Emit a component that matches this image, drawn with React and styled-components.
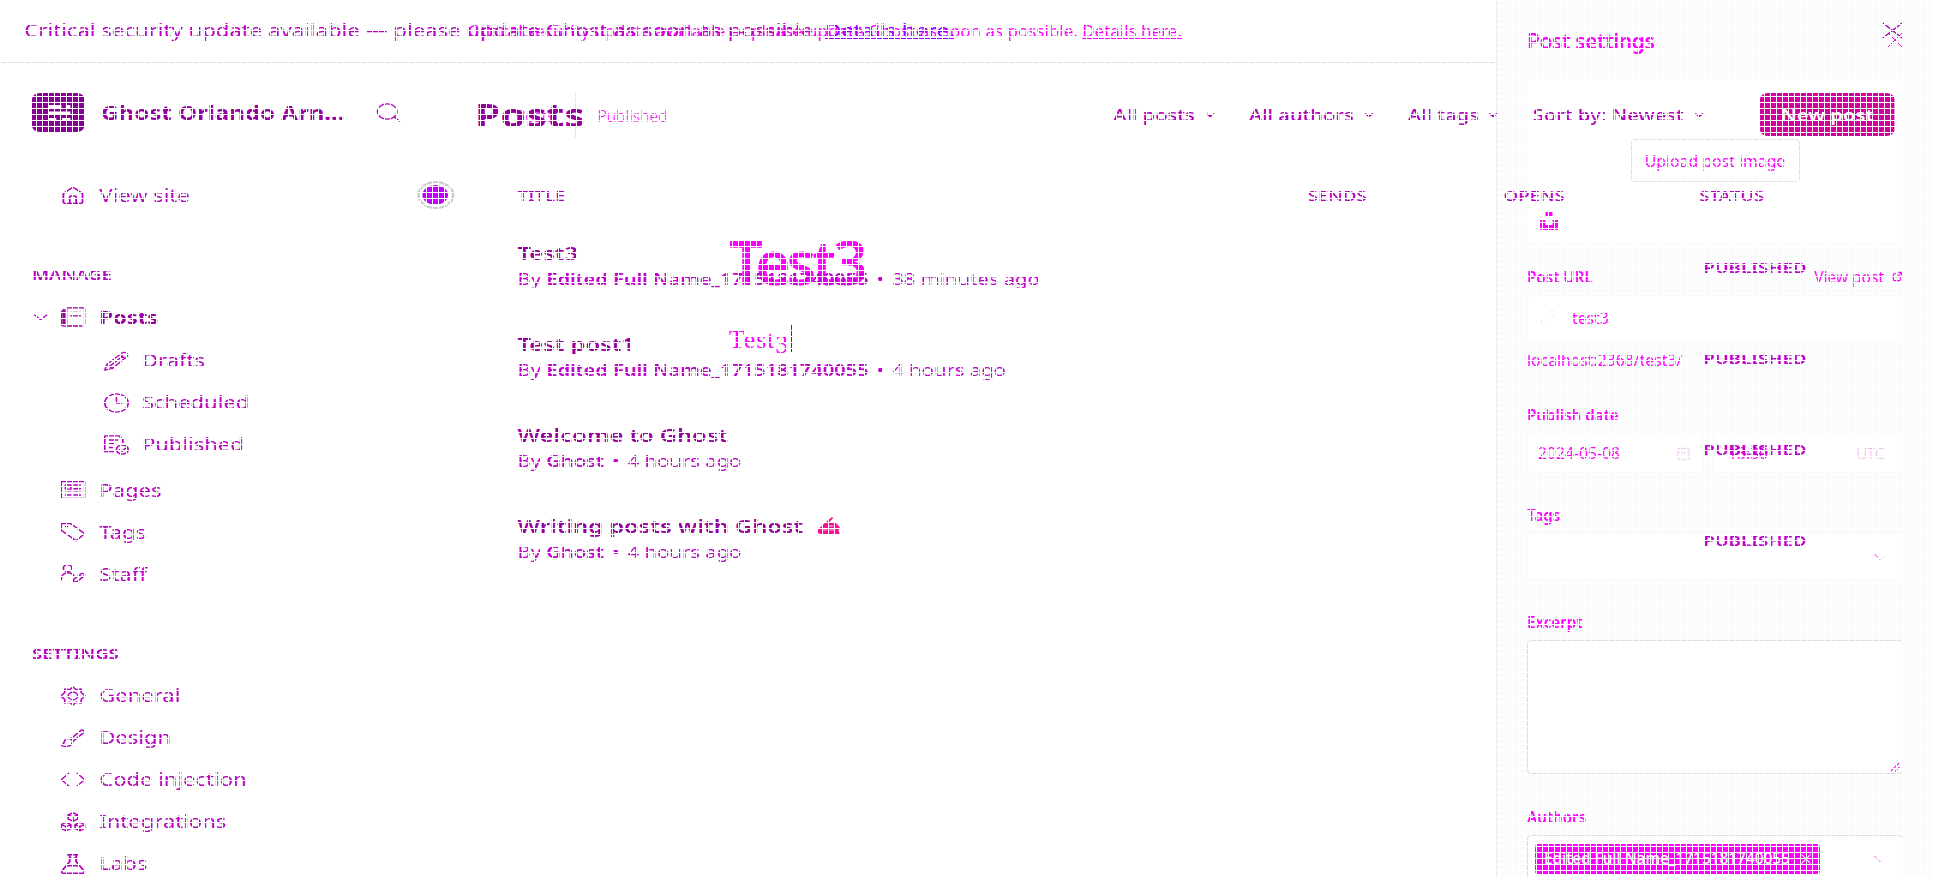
import React from 'react';
import styled, { createGlobalStyle, css } from 'styled-components';
import { Home, Search, ExternalLink, CalendarDays } from 'lucide-react';

const GlobalStyle = createGlobalStyle`
  * { box-sizing: border-box; }
  body { margin: 0; background: #fff; font-family: "Noto Sans", sans-serif; overflow: hidden; }
`;

const STRETCH = 1.28;
const ink = { dark: '#98009e', mid: '#b800c2', soft: '#c000ce', hot: '#ff00ff' };

const Stage = styled.div`
  position: relative;
  display: grid;
  width: 1933px;
  height: 878px;
  overflow: hidden;
  background: #fff;
  &::after {
    content: '';
    position: absolute;
    inset: 0;
    pointer-events: none;
    background-image: linear-gradient(to right, #fff 1px, transparent 1px),
      linear-gradient(to bottom, #fff 1px, transparent 1px);
    background-size: 6px 6px;
  }
`;
const layer = css`
  grid-area: 1 / 1;
  height: 878px;
  overflow: hidden;
`;

/* ---------- admin layer ---------- */
const Admin = styled.div`
  ${layer}
  display: grid;
  grid-template: 63px 1fr / 342px 1fr;
  width: 1510px;
  transform: scaleX(${STRETCH});
  transform-origin: 0 0;
`;
const AdminBanner = styled.header`
  grid-column: 1 / -1;
  display: flex;
  align-items: center;
  justify-content: space-between;
  padding: 0 23px 2px 19px;
  font-size: 17.3px;
  color: ${ink.mid};
  white-space: pre;
  a { color: #9400ff; text-decoration: underline; }
`;
const Sidebar = styled.aside`
  display: flex;
  flex-direction: column;
`;
const Brand = styled.div`
  display: flex;
  align-items: center;
  height: 111.5px;
  padding: 0 27px 12px 25px;
  svg:last-child { margin-left: auto; }
`;
const SiteName = styled.strong`
  margin-left: 13px;
  font-size: 18.8px;
  font-weight: 700;
  color: ${ink.dark};
`;
const Caption = styled.h2`
  display: flex;
  align-items: center;
  height: 43px;
  margin: 36.5px 0 0;
  padding-left: 25px;
  font-size: 14.4px;
  font-weight: 600;
  color: ${ink.mid};
`;
const NavRow = styled.a`
  display: flex;
  align-items: center;
  flex: none;
  height: 42px;
  padding-left: ${p => (p.$sub ? 80.5 : 47.2)}px;
  color: ${p => (p.$active ? ink.dark : ink.mid)};
  font-size: 17.2px;
  font-weight: ${p => (p.$active ? 700 : 400)};
  svg { flex: none; margin-right: 10.4px; }
`;
const ActiveRow = styled.div`
  display: flex;
  align-items: center;
  padding-left: 26px;
  color: ${ink.mid};
  ${NavRow} { padding-left: 9.6px; }
`;
const SubNav = styled.div`
  display: flex;
  flex-direction: column;
  padding: 1.5px 0 3.5px;
`;
const NavToggleRow = styled.div`
  display: flex;
  align-items: center;
`;
const GlobeToggle = styled.span`
  display: flex;
  align-items: center;
  justify-content: center;
  width: 29px;
  height: 28px;
  margin: -2px -12.5px 0 auto;
  border: 2.5px solid #cacaca;
  border-radius: 50%;
  &::before {
    content: '';
    width: 20px;
    height: 20px;
    border-radius: 50%;
    background: #bf00ff;
  }
`;
const Main = styled.main`
  display: flex;
  flex-direction: column;
  padding: 0 30px;
`;
const Toolbar = styled.div`
  display: flex;
  align-items: center;
  height: 103px;
`;
const PageTitle = styled.h1`
  margin: 0 auto 0 -1px;
  font-size: 32px;
  font-weight: 700;
  color: ${ink.dark};
`;
const Filter = styled.button`
  display: flex;
  align-items: center;
  gap: 8px;
  margin-right: ${p => (p.$last ? 44.5 : 27.2)}px;
  padding: 1px 0 0;
  border: 0;
  background: none;
  font: 500 15.8px "Noto Sans", sans-serif;
  color: #b000ba;
`;
const NewPost = styled.button`
  width: 105px;
  height: 43px;
  border: 0;
  border-radius: 6px;
  background: #d2009c;
  color: #fff;
  font: 600 15.8px "Noto Sans", sans-serif;
`;
const columns = css`
  display: grid;
  grid-template-columns: 617.3px 153px 153px 1fr;
  padding-left: 32.3px;
`;
const TableHead = styled.div`
  ${columns}
  align-items: center;
  height: 56px;
  padding-top: 1.5px;
  font-size: 14.6px;
  font-weight: 550;
  color: ${ink.mid};
`;
const PostRow = styled.div`
  ${columns}
  align-items: center;
  height: 91px;
`;
const PostInfo = styled.div`
  padding-bottom: 2px;
  white-space: nowrap;
`;
const PostTitle = styled.h3`
  display: flex;
  align-items: center;
  gap: 10px;
  margin: 0;
  font-size: 18.5px;
  font-weight: 600;
  line-height: 25px;
  color: ${ink.dark};
`;
const PostMeta = styled.p`
  margin: 0;
  font-size: 15.85px;
  line-height: 29px;
  color: ${ink.soft};
  b { font-weight: 600; letter-spacing: -0.13px; }
  i { margin: 0 2.2px; font-style: normal; }
`;
const PostStatus = styled.span`
  grid-column: 4;
  padding: 0 0 2px 3px;
  font-size: 14.6px;
  font-weight: 600;
  color: ${ink.soft};
`;

/* ---------- editor layer ---------- */
const Editor = styled.div`
  ${layer}
  display: grid;
  grid-template-columns: 1496px 437px;
  color: ${ink.hot};
`;
const Canvas = styled.section`
  display: flex;
  flex-direction: column;
`;
const EditorBanner = styled.div`
  display: flex;
  align-items: center;
  height: 63px;
  padding: 0 0 2px 468px;
  border-bottom: 1px solid #dedede;
  font-size: 16.98px;
  white-space: pre;
  a { text-decoration: underline; }
`;
const Crumbs = styled.div`
  display: flex;
  align-items: center;
  height: 106px;
  padding-left: 503px;
  font-size: 15.7px;
  font-weight: 300;
`;
const Divider = styled.i`
  width: 1px;
  height: 45px;
  margin: 0 22px 1px 14px;
  background: #e4e4e8;
`;
const CrumbLink = styled.span`
  display: flex;
  align-items: center;
  gap: 6px;
  width: 57.5px;
  svg { color: #eee; }
`;
const DocTitle = styled.h1`
  margin: 56px 0 0 729px;
  font-size: 60.5px;
  font-weight: 600;
  line-height: 74px;
  letter-spacing: -4px;
`;
const DocBody = styled.p`
  display: flex;
  height: 29px;
  margin: 25px 0 0 729px;
  font: 26px/32px "Liberation Serif", serif;
  letter-spacing: 0.8px;
  b { padding-top: 5px; font-weight: 400; }
  &::after {
    content: '';
    width: 1px;
    height: 28px;
    margin-left: 2px;
    background: ${ink.dark};
  }
`;
const Panel = styled.aside`
  display: flex;
  flex-direction: column;
  height: 878px;
  overflow: hidden;
  padding: 0 30px;
  border-left: 1px solid #e3ebf1;
  background: #fafbfd;
`;
const PanelHead = styled.div`
  display: flex;
  flex: none;
  align-items: center;
  justify-content: space-between;
  height: 80px;
  padding-top: 2px;
  font-size: 21px;
  font-weight: 600;
  letter-spacing: -0.4px;
  svg { margin-bottom: 3px; }
`;
const ImageBox = styled.div`
  display: flex;
  flex: none;
  flex-direction: column;
  align-items: center;
  justify-content: space-between;
  height: 162px;
  padding: 59px 13px 12px;
  border-radius: 4px;
  background: #fff;
  > svg { align-self: flex-start; }
`;
const UploadButton = styled.button`
  width: 169px;
  height: 43px;
  border: 1px solid #d9e1e4;
  border-radius: 4px;
  background: #fff;
  font: 400 15.8px "Noto Sans", sans-serif;
  color: ${ink.hot};
`;
const FieldLabel = styled.div`
  display: flex;
  flex: none;
  align-items: center;
  justify-content: space-between;
  height: 36px;
  margin-top: ${p => p.$gap}px;
  padding-bottom: 1px;
  font-size: 15.2px;
  font-weight: 600;
`;
const ViewLink = styled.a`
  display: flex;
  align-items: center;
  gap: 8px;
  font-size: 15.5px;
  font-weight: 400;
`;
const Field = styled.div`
  display: flex;
  flex: ${p => p.$grow || 'none'};
  align-items: center;
  height: ${p => p.$h}px;
  padding: ${p => p.$pad || '0 15px'};
  border: 1px solid ${p => (p.$outlined ? '#d3dfe6' : '#f6f9fb')};
  border-radius: 4px;
  background: #fff;
  font-size: 15.7px;
  svg:last-child { margin-left: auto; }
`;
const Slug = styled.span`
  margin-left: 16px;
`;
const Zone = styled.span`
  margin-left: auto;
  font-size: 15px;
  font-weight: 300;
  color: #eeb4ee;
`;
const DateRow = styled.div`
  display: flex;
  flex: none;
  gap: 10px;
`;
const Hint = styled.div`
  flex: none;
  height: 39px;
  font-size: 15.75px;
  line-height: 38px;
`;
const ExcerptArea = styled(Field)`
  align-items: flex-end;
`;
const Chip = styled.span`
  display: flex;
  flex: none;
  align-items: center;
  justify-content: space-between;
  width: 285px;
  height: 30px;
  padding: 0 9px;
  border-radius: 3px;
  background: ${ink.hot};
  color: #fff;
  font-size: 15.4px;
  font-weight: 500;
  white-space: nowrap;
`;

/* ---------- icons ---------- */
const Icon = ({ size = 20, w = 1.6, color = 'currentColor', children }) => (
  <svg width={size} height={size} viewBox="0 0 24 24" fill="none" stroke={color} strokeWidth={w} strokeLinecap="round" strokeLinejoin="round">
    {children}
  </svg>
);
const Cross = ({ size, w, color }) => (
  <Icon size={size} w={w} color={color}><path d="M2 2l20 20M22 2L2 22" /></Icon>
);
const Chevron = ({ size = 7, w = 1.4 }) => (
  <svg width={size} height={size / 1.8} viewBox="0 0 18 10" fill="none" stroke="currentColor" strokeWidth={(w * 18) / size}>
    <path d="M1 1l8 8 8-8" />
  </svg>
);
const SelectArrow = () => (
  <svg width="13" height="8" viewBox="0 0 13 8" fill="none">
    <path d="M.5 1l6 6" stroke="#ff30ff" />
    <path d="M6.500 7l6-6" stroke="#f1e6f1" />
  </svg>
);
const Logo = () => (
  <svg width="41" height="39" viewBox="0 0 41 39">
    <rect width="41" height="39" rx="6" fill="#880091" />
    <path d="M12.500 12h10.500v3.500H12.500zM26.500 12h3.500v3.500h-3.500zM12.500 18.500H30V21H12.500zM12.500 25H19v2.500h-6.500zM23.500 25H30v2.500h-6.500z" fill="#fff" />
  </svg>
);
const PostsIcon = () => (
  <Icon w={1.5}>
    <path d="M6 1h15.500a1.500 1.500 0 0 1 1.500 1.500v17a1.500 1.500 0 0 1-1.500 1.500H6zM1 5v15.500A2.500 2.500 0 0 0 3.500 23H20M10 6.500h9M10 10.500h9" />
    <path d="M3.500 4v16" strokeWidth="3" />
  </Icon>
);
const PencilIcon = () => (
  <Icon w={1.5}><path d="M1 23l2-7L17 2.500a3 3 0 0 1 4.500 4.500L8 21zM15 4.500l4.500 4.500M3 16l5 5M18 6L6 18" /></Icon>
);
const ClockIcon = () => (
  <Icon w={1.5}><circle cx="12" cy="12" r="11" /><path d="M12 5.500V12h5" /></Icon>
);
const PublishedIcon = () => (
  <Icon><path d="M10 20H1V1h13l4 4v4M5 6h8M5 10.500h5M5 15h3" /><circle cx="17.500" cy="17.500" r="5.500" /><path d="M15 17.500l2 2 3.500-3.500" /></Icon>
);
const PagesIcon = () => (
  <Icon><path d="M1 2h22v20H1zM5 6h5v5H5zM13 6h6M13 10.500h6M5 14.500h5M5 18h5M13 14.500h6M13 18h6" /></Icon>
);
const TagIcon = () => (
  <Icon><path d="M1 2h9l13 12-8 8.500L1 10zM5 5.500h2" /></Icon>
);
const StaffIcon = () => (
  <Icon><circle cx="7" cy="5" r="4" /><path d="M1 19c0-7 4-8.500 6.500-8.500 2.500 0 4.500 1.500 5.500 4M12 22l1-4 7-6.500a2 2 0 0 1 2.700 2.700L16 21zM18 13.500l2.500 2.500" /></Icon>
);
const GearIcon = () => (
  <Icon><circle cx="12" cy="12" r="4.500" /><path d="M12 1l3 3.500 4.500-1 .3 4.500L23.500 12l-3.700 4 -.3 4.500-4.500-1L12 23l-3-3.500-4.500 1-.3-4.500L.5 12l3.700-4 .3-4.500 4.500 1z" /></Icon>
);
const BrushIcon = () => (
  <Icon><path d="M10 13L20 2.500a2 2 0 0 1 2.500 2.500L12 16M10 13c-3-1-5.500 0-6 3-.3 2.500-1.500 4-3 5 5 2.500 10 1 11-5zM10 13l2 3" /></Icon>
);
const CodeIcon = () => (
  <Icon><path d="M8 4l-7 7.500L8 19M16 4l7 7.500-7 7.500" /></Icon>
);
const IntegrationsIcon = () => (
  <Icon><path d="M12 1l4.500 2.500v5L12 11 7.500 8.500v-5zM5.500 12.500l4.500 2.500v5l-4.500 2.500L1 20v-5zM18.500 12.500L23 15v5l-4.500 2.500L14 20v-5zM7.500 3.500L12 6l4.500-2.500M12 6v5M1 15l4.500 2.500L10 15M5.500 17.500v5M14 15l4.500 2.500L23 15M18.500 17.500v5" /></Icon>
);
const FlaskIcon = () => (
  <Icon w={1.8}><path d="M7 1h10M9 1v8L1.500 20.500C1 22 1.800 23 3 23h18c1.200 0 2-1 1.500-2.500L15 9V1M9 5h6M6.500 14h11" /></Icon>
);
const WritingHand = () => (
  <svg width="19" height="17" viewBox="0 0 19 17">
    <path d="M1 16v-3l2-3 5-6 4-4 1 1-3 4 5 1 3 4v2l-1 1 1 4H3z" fill="#ff0a96" />
    <path d="M5 13h3M10 13h4M9 9h4" stroke="#ffc4e4" strokeWidth="1" />
  </svg>
);
const UnsplashIcon = () => (
  <svg width="18" height="18" viewBox="0 0 18 18">
    <path d="M5.500 0h7v4.500h-7zM0 8h5.500v5h7V8H18v10H0z" fill="#ff00ff" />
  </svg>
);
const LinkIcon = () => (
  <Icon size={16} w={1.5} color="#e9ecee"><path d="M9 15l6-6M10 8l5-5a4 4 0 0 1 6 6l-5 5M14 16l-5 5a4 4 0 0 1-6-6l5-5" /></Icon>
);
const ResizeHandle = () => (
  <Icon size={10} w={3}><path d="M2 22L22 2M13 22l9-9" /></Icon>
);

const notice = 'Critical security update available — please update Ghost as soon as possible. ';
const filters = ['All posts', 'All authors', 'All tags', 'Sort by: Newest'];
const posts = [
  { title: 'Test3', author: 'Edited Full Name_1715181740055', when: '38 minutes ago' },
  { title: 'Test post1', author: 'Edited Full Name_1715181740055', when: '4 hours ago' },
  { title: 'Welcome to Ghost', author: 'Ghost', when: '4 hours ago' },
  { title: 'Writing posts with Ghost', author: 'Ghost', when: '4 hours ago', hand: true },
];

const NavItem = ({ icon, label, sub }) => <NavRow $sub={sub}>{icon}{label}</NavRow>;

const AdminView = () => (
  <Admin>
    <AdminBanner>
      <span>{notice}<a>Details here.</a></span>
      <Cross size={17} w={1.8} color="#a000aa" />
    </AdminBanner>
    <Sidebar>
      <Brand>
        <Logo />
        <SiteName>Ghost Orlando Arn...</SiteName>
        <Search size={23} strokeWidth={1.3} color={ink.mid} />
      </Brand>
      <NavToggleRow>
        <NavItem icon={<Home size={20} strokeWidth={1.7} />} label="View site" />
        <GlobeToggle />
      </NavToggleRow>
      <Caption>MANAGE</Caption>
      <ActiveRow>
        <Chevron size={11.6} w={1.2} />
        <NavRow $active><PostsIcon />Posts</NavRow>
      </ActiveRow>
      <SubNav>
        <NavItem sub icon={<PencilIcon />} label="Drafts" />
        <NavItem sub icon={<ClockIcon />} label="Scheduled" />
        <NavItem sub icon={<PublishedIcon />} label="Published" />
      </SubNav>
      <NavItem icon={<PagesIcon />} label="Pages" />
      <NavItem icon={<TagIcon />} label="Tags" />
      <NavItem icon={<StaffIcon />} label="Staff" />
      <Caption>SETTINGS</Caption>
      <NavItem icon={<GearIcon />} label="General" />
      <NavItem icon={<BrushIcon />} label="Design" />
      <NavItem icon={<CodeIcon />} label="Code injection" />
      <NavItem icon={<IntegrationsIcon />} label="Integrations" />
      <NavItem icon={<FlaskIcon />} label="Labs" />
    </Sidebar>
    <Main>
      <Toolbar>
        <PageTitle>Posts</PageTitle>
        {filters.map((name, i) => (
          <Filter key={name} $last={i === filters.length - 1}>{name}<Chevron /></Filter>
        ))}
        <NewPost>New post</NewPost>
      </Toolbar>
      <TableHead><span>TITLE</span><span>SENDS</span><span>OPENS</span><span>STATUS</span></TableHead>
      {posts.map(p => (
        <PostRow key={p.title}>
          <PostInfo>
            <PostTitle>{p.title}{p.hand && <WritingHand />}</PostTitle>
            <PostMeta>By <b>{p.author}</b> <i>•</i> {p.when}</PostMeta>
          </PostInfo>
          <PostStatus>PUBLISHED</PostStatus>
        </PostRow>
      ))}
    </Main>
  </Admin>
);

const EditorView = () => (
  <Editor>
    <Canvas>
      <EditorBanner>{notice}<a>Details here.</a></EditorBanner>
      <Crumbs>
        <CrumbLink><Icon size={7} w={3}><path d="M18 2L6 12l12 10" /></Icon>Posts</CrumbLink>
        <Divider />
        Published
      </Crumbs>
      <DocTitle>Test3</DocTitle>
      <DocBody>Test<b>3</b></DocBody>
    </Canvas>
    <Panel>
      <PanelHead>Post settings<Cross size={16} w={1.5} /></PanelHead>
      <ImageBox>
        <UploadButton>Upload post image</UploadButton>
        <UnsplashIcon />
      </ImageBox>
      <FieldLabel $gap={17}>Post URL<ViewLink>View post<ExternalLink size={11} strokeWidth={2.5} /></ViewLink></FieldLabel>
      <Field $h={46} $pad="0 12px"><LinkIcon /><Slug>test3</Slug></Field>
      <Hint>localhost:2368/test3/</Hint>
      <FieldLabel $gap={17}>Publish date</FieldLabel>
      <DateRow>
        <Field $h={40} $grow="0 0 176px" $pad="0 11px 0 10px">2024-05-08<CalendarDays size={15} strokeWidth={1.3} color="#f4b8f4" /></Field>
        <Field $h={40} $grow="1" $pad="0 18px 0 14px">13:30<Zone>UTC</Zone></Field>
      </DateRow>
      <FieldLabel $gap={24}>Tags</FieldLabel>
      <Field $h={47}><SelectArrow /></Field>
      <FieldLabel $gap={24}>Excerpt</FieldLabel>
      <ExcerptArea $outlined $h={134} $pad="0 2px 1px 0"><ResizeHandle /></ExcerptArea>
      <FieldLabel $gap={25}>Authors</FieldLabel>
      <Field $outlined $h={47} $pad="0 15px 0 7px">
        <Chip>Edited Full Name_1715181740055<Cross size={10} w={2.5} /></Chip>
        <SelectArrow />
      </Field>
    </Panel>
  </Editor>
);

export default function App() {
  return (
    <>
      <GlobalStyle />
      <Stage>
        <EditorView />
        <AdminView />
      </Stage>
    </>
  );
}
